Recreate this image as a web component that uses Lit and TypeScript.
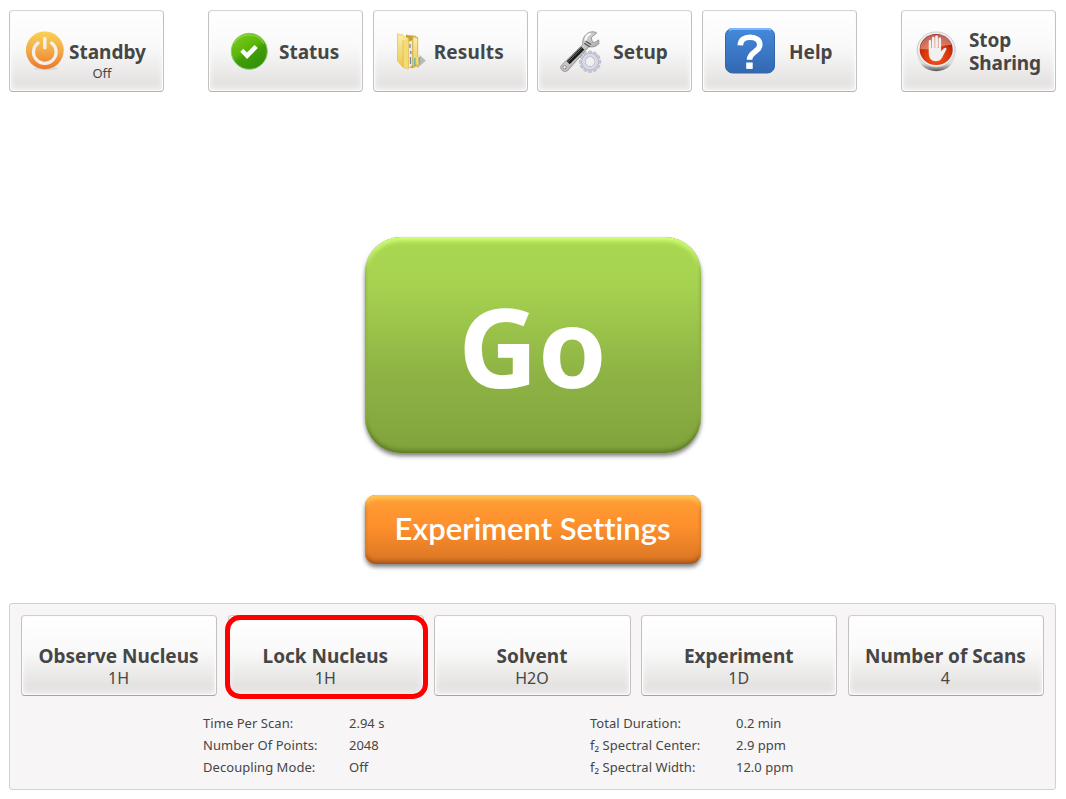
import { css, html, LitElement, svg } from 'lit'
import { customElement, property } from 'lit/decorators.js'
import { classMap } from 'lit/directives/class-map.js'

const gearTeeth = Array.from({ length: 12 }, (_, i) => i * 30)

const icons = {
  standby: svg`
    <svg width="40" height="42" viewBox="0 0 40 42">
      <defs>
        <linearGradient id="amber" x1="0" y1="0" x2="0" y2="1">
          <stop offset="0" stop-color="#f9d254" />
          <stop offset="0.5" stop-color="#f3ab48" />
          <stop offset="1" stop-color="#e9792b" />
        </linearGradient>
      </defs>
      <ellipse cx="21" cy="38.4" rx="12" ry="2" fill="#000" opacity="0.08" />
      <circle cx="19.8" cy="20.3" r="18.9" fill="url(#amber)" />
      <path d="M13 13a11.3 11.3 0 1 0 13.6 0" fill="none" stroke="#f5f0eb" stroke-width="3.3" stroke-linecap="round" />
      <path d="M19.8 8.5v9.2" stroke="#f5f0eb" stroke-width="3.5" stroke-linecap="round" />
    </svg>`,
  status: svg`
    <svg width="38" height="38" viewBox="0 0 38 38">
      <defs>
        <linearGradient id="green" x1="0.2" y1="0" x2="0.8" y2="1">
          <stop offset="0" stop-color="#79cc18" />
          <stop offset="0.45" stop-color="#58b40c" />
          <stop offset="0.55" stop-color="#429f08" />
          <stop offset="1" stop-color="#318d08" />
        </linearGradient>
      </defs>
      <circle cx="19.3" cy="19.3" r="18" fill="url(#green)" stroke="#8acb68" stroke-width="1" />
      <path d="M4 12a17 17 0 0 1 30 0" fill="none" stroke="#a4df72" stroke-width="1" opacity="0.7" />
      <path d="M10.3 19.8l3-3 3.6 3.7 7.7-7.5 3.2 3.1L17 27.1z" fill="#fff" />
    </svg>`,
  results: svg`
    <svg width="30" height="38" viewBox="0 0 30 38">
      <defs>
        <linearGradient id="manila" x1="0" y1="0" x2="0" y2="1">
          <stop offset="0" stop-color="#fbeea6" />
          <stop offset="1" stop-color="#ecc750" />
        </linearGradient>
      </defs>
      <path d="M20 35.5l8.800-7.700-6-5.800z" fill="#8d8d8d" opacity="0.55" />
      <path d="M12 2l6 .5 3 2v20l2 1v7l-8 3z" fill="#e2bc4a" />
      <path d="M9 1.5l7 2v31l-6 1z" fill="#c99f32" />
      <path d="M11.6 9l3.800-2v25l-3.800 3.500z" fill="#e9ebf2" />
      <path d="M13 11v4M13.800 18v3M13.500 24v7" stroke="#7884a0" stroke-width="1.3" />
      <path d="M15.800 3.700l5 1.300v20l-1.600 7-3.400 2.500z" fill="url(#manila)" stroke="#c5a23c" stroke-width=".6" />
      <path d="M17.800 25v8M22.400 24v6.500" stroke="#68b7ba" stroke-width="1.5" />
      <path d="M20.300 24v7.500" stroke="#f3df76" stroke-width="2" />
      <path d="M.5.8l3 1 1.500-.7 1.500 2 4.800 2v30.800L6 34.300.5 28z" fill="url(#manila)" stroke="#d8b64d" stroke-width=".6" />
      <path d="M6.200 7.500v26.200" stroke="#cba43c" stroke-width=".7" />
      <path d="M6.500 7.500l4.800-2v30.400l-4.800-2z" fill="#f6db74" />
    </svg>`,
  setup: svg`
    <svg width="42" height="42" viewBox="0 0 42 42">
      <defs>
        <linearGradient id="steel" x1="0" y1="0" x2="1" y2="1">
          <stop offset="0" stop-color="#f4f4f4" />
          <stop offset="0.5" stop-color="#c6c6c6" />
          <stop offset="1" stop-color="#838383" />
        </linearGradient>
      </defs>
      ${gearTeeth.map((angle) =>
        svg`<rect x="28.4" y="20" width="3.4" height="5" rx=".7" fill="#c9cbd9" stroke="#a5a8ba" stroke-width=".5" transform="rotate(${angle} 30.1 30.7)" />`
      )}
      <circle cx="30.1" cy="30.7" r="6.6" fill="none" stroke="#a8aaba" stroke-width="4" />
      <circle cx="30.1" cy="30.7" r="6.6" fill="none" stroke="#d9dae5" stroke-width="3" />
      <path
        d="M1.500 34.200L22.800 13.400c-.7-5.500 1.800-10 6.500-12 3-1.100 5.800-.7 7.400.6l-5.400 4.400 1 4.500 2.600.5 3.800-2.500.2 3.600c-2 3-5.800 4-10 3.200L9.200 37.800c-1.400 3-6 3.500-7.800.8-1-1.500-.8-3 .1-4.400z"
        fill="url(#steel)" stroke="#858585" stroke-width=".8" />
      <path d="M8.200 31.800L22.800 17.200" stroke="#1d1d1d" stroke-width="4.2" />
      <path d="M8.200 30.700L21.800 17.200" stroke="#6a6a6a" stroke-width="1" />
      <path d="M24.300 12.200l5.400 3.500M25.700 10.200l5.400 3.400" stroke="#4b4b4b" stroke-width="1.2" />
      <path d="M25.600 9.600c0-3.600 1.700-5.900 5-7" stroke="#fff" stroke-width="1.8" fill="none" />
      <circle cx="4.6" cy="36.2" r="1.7" fill="#eee" stroke="#777" stroke-width=".8" />
    </svg>`,
  help: svg`
    <svg width="50" height="46" viewBox="0 0 50 46">
      <defs>
        <linearGradient id="blue" x1="0" y1="0" x2="0" y2="1">
          <stop offset="0" stop-color="#4489dc" />
          <stop offset="1" stop-color="#3268b0" />
        </linearGradient>
      </defs>
      <rect x=".5" y=".5" width="49" height="44.5" rx="7" fill="url(#blue)" stroke="#3266a9" />
      <path d="M4 2.200Q5.300 1 7.500 1h35q2.200 0 3.500 1.200" fill="none" stroke="#7db8fb" stroke-width="2" />
      <path d="M15.300 17.300C15.600 12 19.300 9.300 25 9.300c6 0 9.800 2.900 9.800 7.500 0 7.200-10.300 6.700-10.300 15" fill="none" stroke="#fff" stroke-width="5.6" />
      <rect x="21.2" y="34.5" width="6.5" height="6.4" fill="#fff" />
    </svg>`,
  stop: svg`
    <svg width="42" height="42" viewBox="0 0 42 42">
      <defs>
        <linearGradient id="chrome" x1="0" y1="0" x2="0" y2="1">
          <stop offset="0" stop-color="#b8b8b8" />
          <stop offset="0.55" stop-color="#f3f3f3" />
          <stop offset="0.8" stop-color="#dcdcdc" />
          <stop offset="1" stop-color="#555" />
        </linearGradient>
        <radialGradient id="red" cx="0.5" cy="0.75" r="0.75">
          <stop offset="0" stop-color="#fb5a1c" />
          <stop offset="0.6" stop-color="#d23008" />
          <stop offset="1" stop-color="#8c1405" />
        </radialGradient>
      </defs>
      <ellipse cx="20.2" cy="21" rx="19.7" ry="19.3" fill="url(#chrome)" />
      <ellipse cx="20.2" cy="18.5" rx="19" ry="17.6" fill="#ededed" stroke="#b5b5b5" stroke-width=".6" />
      <ellipse cx="20.2" cy="18.5" rx="16.5" ry="15.6" fill="url(#red)" />
      <path d="M4 18C5 9 12 3.500 20.200 3.500S34 8 35.800 14C26 13 17 20 4 18z" fill="#fff" opacity="0.35" />
      <path
        d="M12.700 21V10.500c0-1.900 2.500-1.900 2.500 0V17h.7V7.300c0-2 2.700-2 2.700 0V17h.6V6c0-2 2.700-2 2.700 0v11h.6V8c0-1.900 2.600-1.900 2.600 0v12.200l2.900-3c1.500-1.300 3.200 0 2.200 1.600l-4.500 8.500c-1.200 2-3 2.900-6 2.900-5 0-7-3.500-7-9.200z"
        fill="#f0f0f0" />
    </svg>`,
}

type IconName = keyof typeof icons

@customElement('tool-button')
export class ToolButton extends LitElement {
  static override styles = css`
    :host {
      display: block;
    }

    button {
      display: flex;
      align-items: flex-start;
      width: 100%;
      height: 82px;
      margin: 0;
      padding: 0;
      border: 1px solid #c4c2c0;
      border-top-color: #d6d4d2;
      border-bottom-color: #b4b2b0;
      border-radius: 4px;
      background: linear-gradient(#fff, #f9f9f9 45%, #e6e4e3 88%, #e8e6e5);
      box-shadow: inset 0 0 0 1px #fbfbfb, inset 0 0 6px #fff;
      color: #464646;
      font-family: "Noto Sans", "Open Sans", sans-serif;
      text-align: left;
    }

    svg {
      display: block;
    }

    .icon {
      flex: none;
    }

    .label {
      font-size: 19px;
      font-weight: 700;
      line-height: 23px;
      padding-top: 30px;
      white-space: pre-line;
    }

    .note {
      font-size: 13px;
      line-height: 16px;
      text-align: center;
      margin: 1px 11px 0 0;
    }

    .standby .icon { padding: 19px 4px 0 15px; }
    .status .icon { padding: 21px 11px 0 21px; }
    .results .icon { padding: 22px 7px 0 23px; }
    .setup .icon { padding: 20px 11px 0 22px; }
    .help .icon { padding: 17px 14px 0 22px; }
    .stop .icon { padding: 20px 11px 0 14px; }

    .results .label {
      letter-spacing: 0.15px;
    }

    .stop .label {
      padding-top: 18px;
      letter-spacing: -0.1px;
    }
  `

  @property() icon: IconName = 'status'
  @property() label = ''
  @property() note = ''

  override render() {
    return html`
      <button class=${this.icon}>
        <span class="icon">${icons[this.icon]}</span>
        <span>
          <div class="label">${this.label}</div>
          ${this.note ? html`<div class="note">${this.note}</div>` : ''}
        </span>
      </button>
    `
  }
}

@customElement('setting-card')
export class SettingCard extends LitElement {
  static override styles = css`
    :host {
      display: block;
      position: relative;
    }

    button {
      display: flex;
      flex-direction: column;
      align-items: center;
      width: 100%;
      height: 81px;
      margin: 0;
      padding: 28px 1px 0 0;
      border: 1px solid #c4c2c0;
      border-top-color: #d0ceca;
      border-bottom-color: #a5a3a0;
      border-radius: 4px;
      background: linear-gradient(#fff, #f9f9f9 45%, #e4e3e1 88%, #e8e6e5);
      box-shadow: inset 0 0 0 1px #fbfbfb, inset 0 0 6px #fff;
      color: #464646;
      font-family: "Noto Sans", "Open Sans", sans-serif;
      white-space: nowrap;
    }

    .name {
      font-size: 19px;
      font-weight: 700;
      line-height: 24px;
    }

    .value {
      font-size: 16px;
      line-height: 20px;
    }

    /* red frame drawn over the selected card */
    .selected::after {
      content: "";
      position: absolute;
      inset: 0 -4px -3px -3px;
      border: 5px solid #fe0000;
      border-radius: 15px;
    }
  `

  @property() name = ''
  @property() value = ''
  @property({ type: Boolean }) selected = false

  override render() {
    return html`
      <button class=${classMap({ selected: this.selected })}>
        <div class="name">${this.name}</div>
        <div class="value">${this.value}</div>
      </button>
    `
  }
}

@customElement('app-root')
export class AppRoot extends LitElement {
  static override styles = css`
    :host {
      display: flex;
      flex-direction: column;
      box-sizing: border-box;
      width: 1066px;
      height: 799px;
      padding: 10px 10px 9px 9px;
      background: #fff;
      color: #464646;
      font-family: "Noto Sans", "Open Sans", sans-serif;
      overflow: hidden;
    }

    .toolbar {
      display: flex;
      justify-content: space-between;
    }

    .toolbar tool-button {
      width: 155px;
    }

    .group {
      display: flex;
      gap: 9.7px;
    }

    .actions {
      display: flex;
      flex-direction: column;
      align-items: center;
      gap: 42px;
      padding: 145px 0 0;
      height: 366px;
    }

    .actions button {
      width: 336px;
      margin: 0;
      padding: 0;
      border: 0;
      color: #fff;
      font-family: Lato, "Noto Sans", sans-serif;
    }

    .actions .go {
      height: 216px;
      border-radius: 36px;
      background: linear-gradient(#a9d852, #a6d250 23%, #8fb445 62%, #80a33c);
      box-shadow: inset 0 5px 4px -1px #d2ff76, inset 0 -4px 4px -1px #607e27,
        inset 0 0 3px #58791f, 0 3px 4px rgba(0, 0, 0, 0.5);
      font-family: "Noto Sans", sans-serif;
      font-size: 110px;
      font-weight: 700;
      line-height: 216px;
    }

    .experiment {
      height: 69px;
      border-radius: 11px;
      background: linear-gradient(#ff9d35, #fe902c 45%, #d97424);
      box-shadow: inset 0 5px 4px -1px #ffc857, inset 0 -4px 4px -1px #a8561a,
        inset 0 0 3px #a85512, 0 3px 4px rgba(0, 0, 0, 0.5);
      font-size: 31px;
      font-weight: 600;
      font-variant-ligatures: none;
    }

    .experiment span {
      display: block;
      height: 69px;
      line-height: 66px;
    }

    .panel {
      box-sizing: border-box;
      height: 187px;
      margin-top: 1px;
      padding: 11px;
      border: 1px solid #d2d0d1;
      border-radius: 3px;
      background: #f7f5f6;
    }

    .cards {
      display: grid;
      grid-template-columns: repeat(5, 1fr);
      gap: 10.6px;
    }

    .facts {
      display: flex;
      gap: 127px;
      padding: 16px 0 0 182px;
      font-size: 13px;
      line-height: 22px;
    }

    dl {
      display: grid;
      grid-template-columns: 146px 114px;
      margin: 0;
      white-space: nowrap;
    }

    dt {
      letter-spacing: 0.05px;
    }

    dd {
      margin: 0;
    }
  `

  cards = [
    { name: 'Observe Nucleus', value: '1H' },
    { name: 'Lock Nucleus', value: '1H', selected: true },
    { name: 'Solvent', value: 'H2O' },
    { name: 'Experiment', value: '1D' },
    { name: 'Number of Scans', value: '4' },
  ]

  facts = [
    [
      ['Time Per Scan:', '2.94 s'],
      ['Number Of Points:', '2048'],
      ['Decoupling Mode:', 'Off'],
    ],
    [
      ['Total Duration:', '0.2 min'],
      ['f₂ Spectral Center:', '2.9 ppm'],
      ['f₂ Spectral Width:', '12.0 ppm'],
    ],
  ]

  override render() {
    return html`
      <div class="toolbar">
        <tool-button icon="standby" label="Standby" note="Off"></tool-button>
        <div class="group">
          <tool-button icon="status" label="Status"></tool-button>
          <tool-button icon="results" label="Results"></tool-button>
          <tool-button icon="setup" label="Setup"></tool-button>
          <tool-button icon="help" label="Help"></tool-button>
        </div>
        <tool-button icon="stop" .label=${'Stop\nSharing'}></tool-button>
      </div>
      <div class="actions">
        <button class="go">Go</button>
        <button class="experiment"><span>Experiment Settings</span></button>
      </div>
      <div class="panel">
        <div class="cards">
          ${this.cards.map((card) => html`
            <setting-card
              .name=${card.name}
              .value=${card.value}
              .selected=${card.selected ?? false}
            ></setting-card>
          `)}
        </div>
        <div class="facts">
          ${this.facts.map((column) => html`
            <dl>${column.map(([term, value]) => html`<dt>${term}</dt><dd>${value}</dd>`)}</dl>
          `)}
        </div>
      </div>
    `
  }
}

declare global {
  interface HTMLElementTagNameMap {
    'tool-button': ToolButton
    'setting-card': SettingCard
    'app-root': AppRoot
  }
}
